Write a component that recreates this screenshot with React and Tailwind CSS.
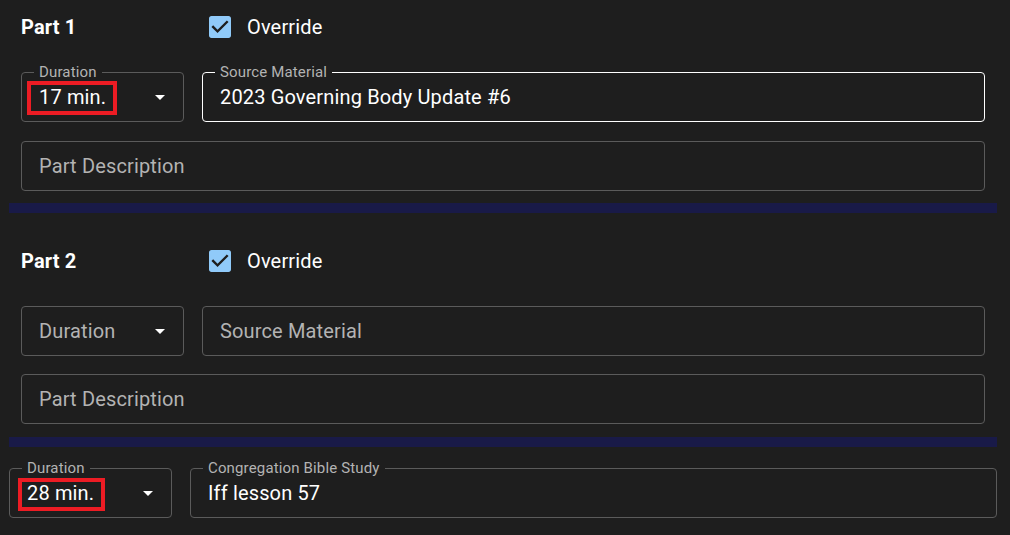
import React from "react";

const font = { fontFamily: "Roboto, 'Noto Sans', sans-serif" };

function Arrow() {
  return (
    <svg viewBox="0 0 24 24" width="24" height="24" className="absolute right-[11px] top-1/2 -translate-y-1/2">
      <path d="M7 10l5 5 5-5z" fill="#ffffff" />
    </svg>
  );
}

function Check() {
  return (
    <svg viewBox="3 3 18 18" width="22" height="22" className="shrink-0">
      <path
        d="M19 3H5c-1.11 0-2 .9-2 2v14c0 1.1.89 2 2 2h14c1.11 0 2-.9 2-2V5c0-1.1-.89-2-2-2zm-9 14l-5-5 1.41-1.41L10 14.17l7.59-7.59L19 8l-9 9z"
        fill="#90caf9"
      />
    </svg>
  );
}

function Field({ label, value, placeholder, className = "", focused = false, select = false, red = null }) {
  return (
    <div
      className={`relative h-[50px] rounded-[4px] border flex items-center pl-[17px] ${
        focused ? "border-white" : "border-[#5b5b5b]"
      } ${className}`}
    >
      {label && (
        <span className="absolute left-[12px] top-[-10px] px-[5px] bg-[#1e1e1e] text-[15px] leading-[18px] tracking-[0.15px] text-[#b3b3b3]">
          {label}
        </span>
      )}
      {value ? (
        <span className="text-[20px] text-white leading-[24px] tracking-[0.15px]">{value}</span>
      ) : (
        <span className="text-[20px] text-[#b3b3b3] leading-[24px] tracking-[0.15px]">{placeholder}</span>
      )}
      {red && <div className={`absolute border-[4px] border-[#ed1c24] ${red}`} />}
      {select && <Arrow />}
    </div>
  );
}

function Title({ text }) {
  return (
    <div className="flex items-center h-[54px]">
      <div className="w-[188px] text-[20px] font-bold text-white tracking-[0.15px]">{text}</div>
      <Check />
      <span className="ml-[16px] text-[20px] text-white tracking-[0.15px]">Override</span>
    </div>
  );
}

export default function App() {
  return (
    <div className="w-[1010px] h-[535px] bg-[#1e1e1e] overflow-hidden" style={font}>
      <div className="ml-[9px] w-[988px]">
        <div className="px-[12px]">
          <Title text="Part 1" />
          <div className="mt-[18px] flex gap-[18px]">
            <Field label="Duration" value="17 min." select className="w-[163px] shrink-0" red="left-[5px] top-[8px] w-[90px] h-[34px]" />
            <Field label="Source Material" value="2023 Governing Body Update #6" focused className="flex-1" />
          </div>
          <Field placeholder="Part Description" className="mt-[19px]" />
        </div>
        <div className="mt-[12px] h-[10px] bg-[#191a48]" />
        <div className="px-[12px] mt-[21px]">
          <Title text="Part 2" />
          <div className="mt-[18px] flex gap-[18px]">
            <Field placeholder="Duration" select className="w-[163px] shrink-0" />
            <Field placeholder="Source Material" className="flex-1" />
          </div>
          <Field placeholder="Part Description" className="mt-[18px]" />
        </div>
        <div className="mt-[13px] h-[10px] bg-[#191a48]" />
        <div className="mt-[21px] flex gap-[18px]">
          <Field label="Duration" value="28 min." select className="w-[163px] shrink-0" red="left-[8px] top-[9px] w-[87px] h-[33px]" />
          <Field label="Congregation Bible Study" value="Iff lesson 57" className="flex-1" />
        </div>
      </div>
    </div>
  );
}
